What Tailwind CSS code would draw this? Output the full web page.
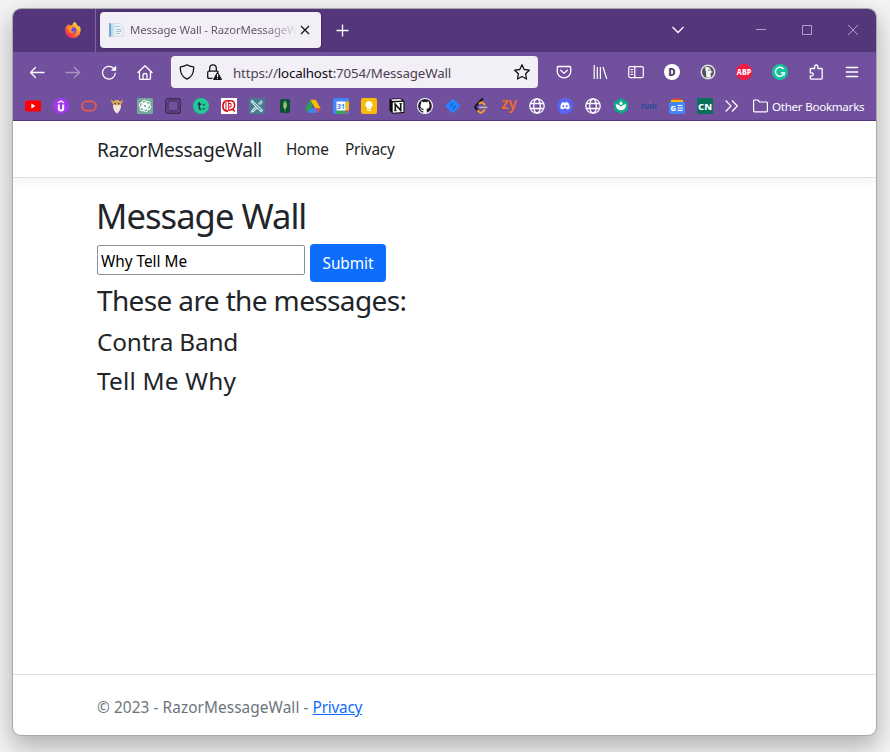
<!DOCTYPE html>
<html lang="en"><head><meta charset="utf-8"><title>Message Wall - RazorMessageWall</title>
<script src="https://cdn.jsdelivr.net/npm/@tailwindcss/browser@4"></script></head>
<body class="h-[752px] w-[890px] overflow-hidden bg-[#f4f4f4] pt-[9px] pl-[13px] font-['Noto_Sans','Open_Sans',sans-serif] text-[#212529]">
<div class="flex h-[726px] w-[863px] flex-col overflow-hidden rounded-[8px] bg-white shadow-[0_0_0_1px_#a9a9a9,0_10px_24px_2px_rgba(0,0,0,0.28)]">

  <!-- Tab strip -->
  <div class="flex h-[43px] shrink-0 items-center bg-[#54377b] text-white">
    <div class="flex h-full w-[83px] items-center justify-end border-r border-[#8065a5] pr-[14px] pb-px">
      <svg class="size-4" viewBox="0 0 16 16"><defs><linearGradient id="fx" x1="1" y1="0" x2=".2" y2="1"><stop offset="0" stop-color="#fff44f"/><stop offset=".35" stop-color="#ffb02e"/><stop offset=".65" stop-color="#ff6a2b"/><stop offset="1" stop-color="#f5156c"/></linearGradient></defs><path fill="url(#fx)" d="M10 0c1 1.200 1.600 2 1.900 3 .8.300 1.200.8 1.600 1.300.8-.1 1.200.100 1.700.9 1.600 5-1.400 10.800-7.200 10.800C3.500 16 .2 12.700.200 8.500c0-2 .5-3.500 1.500-4.900l.3 1C2.500 3.400 3.200 2.500 4 2l.200 1.600c1-.4 2-.4 3 0C7.200 2 8.300.600 10 0z"/><circle cx="8.200" cy="8.400" r="3.100" fill="#7a3fe0"/><path fill="#ff9a2a" d="M3.600 5.500c1.700-.9 3.300-.3 4.200.7-.7 1-1.900 1-2 2 .5 1.500 2.600 1.700 4 .8-.3 2.200-4.500 2.800-5.700.2-.6-1.200-.8-2.300-.5-3.700z"/></svg>
    </div>
    <div class="mb-px ml-1 flex h-9 w-[221px] items-center rounded-[4px] bg-[#f3eff6] pl-2 text-[#5b5563] shadow-[0_0_3px_rgba(0,0,0,0.4)]">
      <svg class="size-4 shrink-0" viewBox="0 0 16 16"><path fill="#6fa9ce" d="M1 1l2.500.5v13L1 15z"/><path fill="#bfe0ef" d="M3.500 1.500h2v13h-2z"/><path fill="#e9f3f8" stroke="#c3d5e0" stroke-width=".7" d="M6 1.500h6l2 2.500v1h1.500v9.500H6z"/><path stroke="#a9bfce" d="M7.500 4.500h4M8 7.500h5.500M8 9.500h5.500M8 11.500h4"/></svg>
      <span class="ml-[6px] w-[168px] overflow-hidden bg-gradient-to-r from-[#5b5563] from-80% to-[#f3eff6] bg-clip-text text-[11.4px] leading-5 tracking-[-0.13px] whitespace-nowrap text-transparent">Message Wall - RazorMessageW</span>
      <svg class="ml-[2px] size-[10px] shrink-0" viewBox="0 0 10 10"><path stroke="#15141a" stroke-width="1.200" d="M1 1l8 8M9 1L1 9"/></svg>
    </div>
    <svg class="ml-[15px] size-[13px]" viewBox="0 0 13 13"><path stroke="#fff" stroke-width="1.300" d="M6.500.5v12M.5 6.500h12"/></svg>
    <svg class="mb-px ml-[323px] h-2 w-3" viewBox="0 0 12 8"><path fill="none" stroke="#fff" stroke-width="1.300" d="M.5 1L6 6.500 11.500 1"/></svg>
    <svg class="mb-px ml-[72px] size-[10px]" viewBox="0 0 10 10"><path stroke="#b39bd0" d="M0 4.500h10"/></svg>
    <svg class="mb-px ml-[36px] size-[10px]" viewBox="0 0 10 10"><path fill="none" stroke="#b39bd0" d="M.5.5h9v9h-9z"/></svg>
    <svg class="mb-px ml-[36px] size-[10px]" viewBox="0 0 10 10"><path stroke="#b39bd0" d="M0 0l10 10M10 0L0 10"/></svg>
  </div>

  <!-- Navigation toolbar -->
  <div class="flex h-[40px] shrink-0 items-center bg-[#71509e] pl-4 text-white">
    <div class="flex gap-5">
      <svg class="size-4" viewBox="0 0 16 16" fill="none" stroke="#fff" stroke-width="1.300" stroke-linecap="round" stroke-linejoin="round"><path d="M15 8.500H1.500M6.500 3.500l-5 5 5 5"/></svg>
      <svg class="size-4 opacity-40" viewBox="0 0 16 16" fill="none" stroke="#fff" stroke-width="1.300" stroke-linecap="round" stroke-linejoin="round"><path d="M1 8.500h13.500M9.500 3.500l5 5-5 5"/></svg>
      <svg class="size-4" viewBox="0 0 16 16"><path fill="none" stroke="#fff" stroke-width="1.300" stroke-linecap="round" d="M14.300 9.500a6.400 6.400 0 1 1-1.800-5.300"/><path fill="#fff" d="M15.200 1.500v5.300h-5.400z"/></svg>
      <svg class="size-4" viewBox="0 0 16 16" fill="none" stroke="#fff" stroke-width="1.300" stroke-linecap="round" stroke-linejoin="round"><path d="M1 8.500L8 1.700l7 6.800M2.500 7.200v7.100q0 1 1 1h9q1 0 1-1V7.200M6 15v-4q0-1.500 2-1.500t2 1.500v4"/></svg>
    </div>
    <div class="ml-[18px] flex h-8 w-[367px] items-center rounded-[4px] bg-[#f3eff6] pr-2 pl-2 text-[#4b4154]">
      <svg class="size-4" viewBox="0 0 16 16" fill="none" stroke="#15141a" stroke-width="1.300" stroke-linejoin="round"><path d="M8 .8C9.800 2.200 12.300 2.700 14.600 2.900c.5 5.600-2 10-6.600 12.300C3.400 12.900.9 8.500 1.400 2.900 3.700 2.700 6.200 2.200 8 .8z"/></svg>
      <svg class="ml-[11px] size-4" viewBox="0 0 16 16"><path fill="none" stroke="#15141a" stroke-width="1.300" d="M3.700 7V4.200a3.300 3.300 0 0 1 6.600 0V7M6.500 14.400H3q-1.300 0-1.300-1.300V8.400Q1.700 7.100 3 7.100h8q1.300 0 1.300 1.300"/><path fill="#15141a" stroke="#15141a" stroke-linejoin="round" d="M11.500 8.300l4 7.200h-8z"/><path stroke="#fff" stroke-width="1.100" d="M11.500 10v3M11.500 13.700v1.100"/></svg>
      <span class="ml-[11px] w-[281px] pt-px text-[13.3px] leading-6 tracking-[-0.14px] whitespace-nowrap">https://<span class="text-[#0c0810]">localhost</span>:7054/MessageWall</span>
      <svg class="size-4 shrink-0" viewBox="0 0 16 16"><path fill="none" stroke="#15141a" stroke-width="1.300" stroke-linejoin="round" d="M8 .8l2.200 4.700 5.100.7-3.700 3.600.9 5.200L8 12.500 3.500 15l.9-5.200L.7 6.200l5.100-.7z"/></svg>
    </div>
    <div class="ml-[18px] flex gap-5">
      <svg class="size-4" viewBox="0 0 16 16" fill="none" stroke="#fff" stroke-width="1.300" stroke-linecap="round" stroke-linejoin="round"><path d="M2.600 2.500h10.800q1.300 0 1.300 1.300V7.500a6.700 6.300 0 0 1-13.400 0V3.800q0-1.300 1.300-1.300zM4.700 6.300L8 9.400l3.300-3.100"/></svg>
      <svg class="size-4" viewBox="0 0 16 16" fill="none" stroke="#fff" stroke-width="1.200"><path d="M2.200 1v14M5.300 3v12M8.400 3v12M11 3l3.800 12"/></svg>
      <svg class="size-4" viewBox="0 0 16 16" fill="none" stroke="#fff" stroke-width="1.200"><rect x=".7" y="2.600" width="14.600" height="11" rx="1.500"/><path d="M6.800 2.600v11M2.400 5.500h2.800M2.400 8h2.800M2.400 10.500h2.800"/></svg>
      <div class="flex size-4 items-center justify-center rounded-full bg-white text-[10px] leading-none font-black text-[#51406d]">D</div>
      <svg class="size-4" viewBox="0 0 16 16"><circle cx="8" cy="8" r="7.500" fill="#dedede"/><circle cx="8" cy="8" r="6" fill="#555"/><path fill="#f2f2f2" d="M5 3.500C8 2 11 4 11 7l2 1-2.200 1c-.6 1.500 0 3 .5 4-1.500 1-3.500 1-5 .3L6 8z"/><path fill="#555" d="M8.500 5.500h1.200v1.200H8.500z"/></svg>
      <svg class="size-4" viewBox="0 0 16 16"><path fill="#ed1e45" d="M4.800 0h6.400L16 4.800v6.400L11.200 16H4.800L0 11.200V4.800z"/><text x="8" y="11.100" text-anchor="middle" font-size="8.500" font-weight="800" fill="#fff" textLength="14.400" lengthAdjust="spacingAndGlyphs">ABP</text></svg>
      <svg class="size-4" viewBox="0 0 16 16"><circle cx="8" cy="8" r="8" fill="#15c39a"/><path fill="none" stroke="#fff" stroke-width="1.400" d="M11.500 5a4.500 4.500 0 1 0 .8 4H9"/><path fill="none" stroke="#fff" d="M12.300 8.500v3"/></svg>
      <svg class="size-4" viewBox="0 0 16 16"><path fill="none" stroke="#fff" stroke-width="1.300" stroke-linejoin="round" d="M2.300 8.800V5.300q0-.8.800-.8h3.500V2.600a1.600 1.600 0 0 1 3.200 0v1.900h3.600q.8 0 .8.800v9q0 .8-.8.800H3.100q-.8 0-.8-.8v-2.500h1.500a1.500 1.500 0 0 0 0-3z"/></svg>
      <svg class="size-4" viewBox="0 0 16 16"><path stroke="#fff" stroke-width="1.300" stroke-linecap="round" d="M2.300 3.500h11.400M2.300 8h11.400M2.300 12.500h11.400"/></svg>
    </div>
  </div>

  <!-- Bookmarks bar -->
  <div class="flex h-[29px] shrink-0 items-center gap-3 border-b border-[#54377b] bg-[#71509e] pl-3 text-white">
    <svg class="size-4 shrink-0" viewBox="0 0 16 16"><rect y="2.500" width="16" height="11" rx="2" fill="#f00"/><path fill="#fff" d="M6.400 5.600v4.800l4-2.400z"/></svg>
    <svg class="size-4 shrink-0" viewBox="0 0 16 16"><circle cx="8" cy="8" r="8" fill="#a435f0"/><path fill="none" stroke="#fff" stroke-width="2" d="M5.800 6.500v3.700a2.200 2.200 0 0 0 4.400 0V6.500"/><path fill="none" stroke="#fff" stroke-width="1.300" d="M5 4.800l3-1.700 3 1.700"/></svg>
    <svg class="size-4 shrink-0" viewBox="0 0 16 16"><rect x="1" y="3.300" width="14" height="9.400" rx="4.700" fill="none" stroke="#e55b4d" stroke-width="1.800"/></svg>
    <svg class="size-4 shrink-0" viewBox="0 0 16 16"><path fill="#d9a85c" d="M2.500.5C3 3 4 3.500 5.500 3.300L6 2h4l.5 1.300C12 3.500 13 3 13.500.5c.7 3.500-.4 5-2 5.500v5h-7V6C2.900 5.500 1.800 4 2.500.5z"/><path fill="#f1e6dc" d="M4 6.500l2 .7h4l2-.7c0 4-1.300 7.500-4 9.200C5.300 14 4 10.500 4 6.500z"/><path fill="#5b3a35" d="M5.500 5h1.500v1.300H5.500zM9 5h1.500v1.300H9z"/></svg>
    <svg class="size-4 shrink-0" viewBox="0 0 16 16"><rect width="16" height="16" rx="1.500" fill="#74aa9c"/><g fill="none" stroke="#fff" stroke-width=".9"><rect x="5" y="2.300" width="4.600" height="8" rx="2.300"/><rect x="5" y="2.300" width="4.600" height="8" rx="2.300" transform="rotate(60 8 8)"/><rect x="5" y="2.300" width="4.600" height="8" rx="2.300" transform="rotate(120 8 8)"/><rect x="5" y="2.300" width="4.600" height="8" rx="2.300" transform="rotate(180 8 8)"/><rect x="5" y="2.300" width="4.600" height="8" rx="2.300" transform="rotate(240 8 8)"/><rect x="5" y="2.300" width="4.600" height="8" rx="2.300" transform="rotate(300 8 8)"/></g></svg>
    <svg class="size-4 shrink-0" viewBox="0 0 16 16" fill="none" stroke="#3b2950"><rect x=".8" y=".8" width="14.400" height="14.400" rx="2" stroke-width="1.400"/><rect x="3" y="3" width="10" height="10" rx="1"/></svg>
    <svg class="size-4 shrink-0" viewBox="0 0 16 16"><circle cx="8" cy="8" r="8" fill="#20c997"/><path fill="none" stroke="#24364b" stroke-width="1.400" d="M6.300 4v6q0 1.500 2 1.500M4.500 6.200h4"/><path fill="#24364b" d="M10 6h1.500v1.500H10zM10 10h1.500v1.500H10z"/></svg>
    <svg class="size-4 shrink-0" viewBox="0 0 16 16"><path fill="#fff" d="M0 0h16v16H0z"/><g fill="none" stroke="#d5121e"><path stroke-width="1.700" d="M7 2.500C3.300 2.500 1.900 5 1.900 8s1.400 5.200 5.100 5.200"/><path stroke-width="1.500" d="M6 2.700h3.500c5.500 0 5.500 9.300 0 9.300H8M10.500 10.500l3.500 3"/><path d="M5 4v8M7.700 3v10M7.700 5.500H10v3.500H7.700"/></g></svg>
    <svg class="size-4 shrink-0" viewBox="0 0 16 16"><rect width="16" height="16" rx="1" fill="#49788f"/><g fill="none" stroke="#c5eee9" stroke-width="1.100"><path d="M3 2.500l10.500 9.800-1.500 1.400L2.300 4zM13 2.500L9.300 6.200M6.500 9L3 12.500M13.500 4L10.800 7M8 10l-3.500 3.500L2.500 14l.5-1.500"/></g></svg>
    <svg class="size-4 shrink-0" viewBox="0 0 16 16"><rect x="3" y="1" width="10" height="14" rx="2" fill="#0c5137"/><path fill="#77b85c" d="M8 2.500C11 6 10.500 9 8.300 11v2.500h-.7V11C5.500 9 5.500 5.500 8 2.500z"/><path stroke="#d9d894" stroke-width=".7" d="M8 5v6"/></svg>
    <svg class="size-4 shrink-0" viewBox="0 0 16 16"><path fill="#20a45a" d="M5.300 1.800l2.700 4.600-5 8.300L.3 10.500z"/><path fill="#fbbc05" d="M5.300 1.800h5.400l5 8.700h-5.300z"/><path fill="#4285f4" d="M5.500 10.500h10.200L13 14.700H3z"/><path fill="#e94335" d="M10.500 10.500h5.200L13 14.700z"/></svg>
    <svg class="size-4 shrink-0" viewBox="0 0 16 16"><rect width="16" height="16" rx="1.500" fill="#4285f4"/><path fill="#fbbc04" d="M12.500 3.500H16v9h-3.500z"/><path fill="#34a853" d="M3.500 12.500h9V16h-9z"/><path fill="#ea4335" d="M12.500 12.500H16L12.500 16z"/><path fill="#fff" d="M3.500 3.500h9v9h-9z"/><text x="8" y="10.500" text-anchor="middle" font-size="7" font-weight="700" fill="#4285f4">31</text></svg>
    <svg class="size-4 shrink-0" viewBox="0 0 16 16"><rect width="16" height="16" rx="2" fill="#fbba04"/><path fill="#fff" d="M8 3a3.700 3.700 0 0 0-2 6.800V11h4V9.800A3.700 3.700 0 0 0 8 3zM6 11.800h4V13H6z"/></svg>
    <svg class="size-4 shrink-0" viewBox="0 0 16 16"><path fill="#0b0b0b" d="M.5.800L11.500.2 15.500 3v12l-12 .8-3-3.500z"/><path fill="#fff" d="M1.700 1.600l9.500-.5 2 1.400-9.500.6zM3.700 4.500l10.700-.7v10.300l-10.700.7z"/><path fill="none" stroke="#111" stroke-width="1.600" d="M6.300 13V6.300l5.400 6V5.500"/><path stroke="#111" stroke-width=".8" d="M5 6.200h2M5 12.700h2.700M10.300 5.600h2.900"/></svg>
    <svg class="size-4 shrink-0" viewBox="0 0 16 16"><circle cx="8" cy="8" r="8" fill="#fff"/><path fill="#24202b" d="M8 .9a7.100 7.100 0 0 0-2.200 13.800c.4 0 .5-.2.500-.4v-1.400c-2 .4-2.400-.9-2.400-.9-.3-.8-.8-1-.8-1-.6-.4.100-.4.100-.4.700 0 1.100.7 1.100.7.600 1.100 1.700.8 2.100.6 0-.5.200-.8.400-1-1.600-.2-3.300-.8-3.300-3.500 0-.8.300-1.400.7-1.900 0-.2-.3-.9.100-1.900 0 0 .6-.2 2 .7a6 6 0 0 1 3.500 0c1.400-.9 2-.7 2-.7.400 1 .100 1.700 0 1.900.5.500.7 1.100.7 1.900 0 2.700-1.600 3.300-3.200 3.500.3.200.5.700.5 1.300v2c0 .3 0 .5.500.4A7.100 7.100 0 0 0 8 .9z"/></svg>
    <svg class="size-4 shrink-0" viewBox="0 0 16 16"><path fill="#2684ff" d="M7.800.5L15.300 8l-7.500 7.500L.3 8z"/><path fill="#0f5fd8" d="M7.800 4.500v2L5 9.500V7zM8 9.300l2.500-2.800v2.700L7.800 12z"/></svg>
    <svg class="size-4 shrink-0" viewBox="0 0 16 16" fill="none" stroke-linecap="round" stroke-width="1.900"><path stroke="#111" d="M9.300 1L2.700 7.800q-1 1.200 0 2.400L5 12.700"/><path stroke="#f89f1b" d="M5 12.700l1.200 1.200q1.500 1.500 3.400 0l1.800-1.800M6.500 5.300q2-1.700 3.500-.2l1.500 1.400"/><path stroke="#b3b3b3" d="M7 9.400h6.500"/></svg>
    <div class="flex size-4 shrink-0 items-center justify-center pb-[5px] text-[15.500px] leading-none font-semibold tracking-[-0.3px] text-[#f26a2e]">zy</div>
    <svg class="size-4 shrink-0" viewBox="0 0 16 16" fill="none" stroke="#fff" stroke-width="1.300"><circle cx="8" cy="8" r="7.200"/><ellipse cx="8" cy="8" rx="3.300" ry="7.200"/><path d="M1.300 5.500h13.400M1.300 10.500h13.400"/></svg>
    <svg class="size-4 shrink-0" viewBox="0 0 16 16"><circle cx="8" cy="8" r="8" fill="#5865f2"/><path fill="#fff" d="M4.800 4.800q1.200-.7 2.200-.7l.3.600h1.400l.3-.6q1 0 2.200.7 1.700 2.500 1.600 5.400-1.300 1-2.500 1.200l-.6-1H6.300l-.6 1q-1.200-.2-2.500-1.200-.1-2.900 1.600-5.400z"/><g fill="#5865f2"><circle cx="6.300" cy="8.200" r="1"/><circle cx="9.700" cy="8.200" r="1"/></g></svg>
    <svg class="size-4 shrink-0" viewBox="0 0 16 16" fill="none" stroke="#fff" stroke-width="1.300"><circle cx="8" cy="8" r="7.200"/><ellipse cx="8" cy="8" rx="3.300" ry="7.200"/><path d="M1.300 5.500h13.400M1.300 10.500h13.400"/></svg>
    <svg class="size-4 shrink-0" viewBox="0 0 16 16"><path fill="#12a988" stroke="#12a988" stroke-linejoin="round" d="M8 .5l6.600 3.800v7.400L8 15.500l-6.600-3.800V4.300z"/><path fill="#fff" d="M8 3.200l1.800 2L8 7.500 6.200 5.200zM2.800 6.300C5.500 6.300 7 7.500 8 9c1-1.500 2.500-2.700 5.200-2.700 0 3.800-2 5.900-5.200 5.900S2.800 10.100 2.800 6.300z"/></svg>
    <svg class="size-4 shrink-0" viewBox="0 0 16 16"><text x="8" y="11" text-anchor="middle" font-size="6.200" font-weight="800" fill="#304b9a">FUNI</text><path stroke="#c45f6b" stroke-width="1.300" d="M9.500 3.500v1.800"/></svg>
    <svg class="size-4 shrink-0" viewBox="0 0 16 16"><path fill="#34a853" d="M1.500 2.500l10-1.500L13 5H2z"/><path fill="#ea4335" d="M4 .5h8v4H4z"/><path fill="#fbbc04" d="M2 2h12v4H2z"/><rect y="4" width="16" height="12" rx="1" fill="#4285f4"/><text x="1.500" y="12.600" font-size="7.500" font-weight="800" fill="#fff">G</text><path stroke="#fff" stroke-width="1.200" d="M8.500 7.500h5M8.500 10h5.500M8.500 12.400h5"/></svg>
    <svg class="size-4 shrink-0" viewBox="0 0 16 16"><path fill="#08705a" d="M0 0h16v16H0z"/><text x="8" y="11.500" text-anchor="middle" font-size="9.500" font-weight="800" fill="#fff" textLength="14" lengthAdjust="spacingAndGlyphs">CN</text></svg>
    <svg class="h-3 w-[13px] shrink-0" viewBox="0 0 13 12" fill="none" stroke="#fff" stroke-width="1.200"><path d="M.7.5L6 6 .7 11.500M7 .5L12.300 6 7 11.500"/></svg>
    <svg class="ml-[3px] h-[14px] w-[15px] shrink-0" viewBox="0 0 15 14" fill="none" stroke="#fff" stroke-width="1.200" stroke-linejoin="round"><path d="M.6 11.800V2Q.6 1 1.600 1h3.100l2 2h6.700q1 0 1 1v7.800q0 1-1 1H1.600q-1 0-1-1z"/></svg>
    <span class="-ml-[8px] pt-px text-[11.600px] leading-4 tracking-[-0.270px] whitespace-nowrap">Other Bookmarks</span>
  </div>

  <!-- Site header -->
  <header class="flex h-[57px] shrink-0 items-center border-b border-[#dee2e6] pt-[2px] pl-[84px] leading-6 shadow-[0_4px_12px_rgba(0,0,0,0.05)]">
    <span class="w-[189px] text-[19.200px] tracking-[-0.27px]">RazorMessageWall</span>
    <span class="w-[59px] text-[15.360px] tracking-[-0.3px]">Home</span>
    <span class="text-[15.360px] tracking-[-0.25px]">Privacy</span>
  </header>

  <!-- Message form and list -->
  <main class="grow pt-[16px] pl-[84px]">
    <h1 class="-ml-px h-[50px] text-[34.600px] leading-[44px] tracking-[-0.960px]">Message Wall</h1>
    <div class="flex items-start gap-[5px]">
      <input value="Why Tell Me" class="mt-px h-[30px] w-[208px] rounded-[2px] border border-[#8f8f9d] px-[3px] pt-[3px] text-[15.360px] tracking-[-0.02px] text-black">
      <button class="h-[38px] w-[76px] rounded-[4px] bg-[#0d6efd] pt-[2px] text-[15.360px] tracking-[-0.04px] text-white">Submit</button>
    </div>
    <h2 class="text-[28px] leading-[36px] tracking-[-0.630px]">These are the messages:</h2>
    <h3 class="mt-[4px] text-[24.400px] leading-[39px] tracking-[-0.2px]">Contra Band</h3>
    <h3 class="text-[24.400px] leading-[39px] tracking-[0.19px]">Tell Me Why</h3>
  </main>

  <footer class="h-[61px] shrink-0 border-t border-[#dee2e6] pl-[84px] text-[15.360px] leading-[65px] tracking-[0.080px] whitespace-pre text-[#6c757d]">© 2023 - RazorMessageWall - <a class="tracking-[-0.25px] text-[#0d6efd] underline">Privacy</a></footer>
</div>
</body></html>
